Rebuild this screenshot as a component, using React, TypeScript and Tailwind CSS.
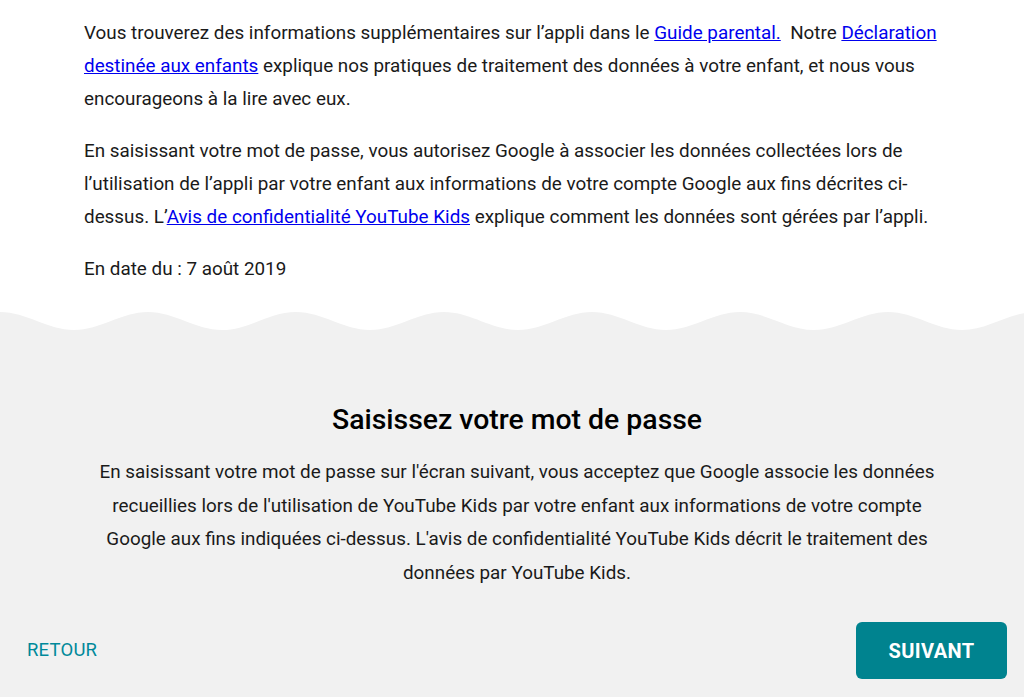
import React from 'react';

const WAVE_PERIOD = 148;

function wavePath(width: number, top: number, bottom: number) {
  // peaks (gray high) at multiples of the period, troughs halfway
  const half = WAVE_PERIOD / 2;
  const k = half * 0.36;
  let d = `M0 ${top}`;
  let x = 0;
  let up = true;
  while (x < width + WAVE_PERIOD) {
    const y0 = up ? top : bottom;
    const y1 = up ? bottom : top;
    d += ` C${x + k} ${y0} ${x + half - k} ${y1} ${x + half} ${y1}`;
    x += half;
    up = !up;
  }
  d += ` L${x} 40 L0 40 Z`;
  return d;
}

export default function App() {
  return (
    <div className="w-full h-[697px] overflow-hidden bg-white font-['Roboto',sans-serif] text-[#1a1a1a] flex flex-col">
      {/* Terms text */}
      <div className="px-[84px] pt-[17px] text-[18.85px] leading-[33px]">
        <p>
          Vous trouverez des informations supplémentaires sur l’appli dans le{' '}
          <a href="#" className="text-[#0000ee] underline">Guide parental.</a>
          {'\u00a0 '}Notre{' '}
          <a href="#" className="text-[#0000ee] underline">Déclaration destinée aux enfants</a>{' '}
          explique nos pratiques de traitement des données à votre enfant, et nous vous encourageons à la lire avec eux.
        </p>
        <p className="mt-[19px]">
          En saisissant votre mot de passe, vous autorisez Google à associer les données collectées lors de l’utilisation de l’appli par votre enfant aux informations de votre compte Google aux fins décrites ci-dessus. L’
          <a href="#" className="text-[#0000ee] underline">Avis de confidentialité YouTube Kids</a>{' '}
          explique comment les données sont gérées par l’appli.
        </p>
        <p className="mt-[19px]">En date du : 7 août 2019</p>
      </div>

      {/* Wave divider */}
      <div className="mt-[25px] h-[20px] w-full">
        <svg width="100%" height="20" viewBox="0 0 1024 20" preserveAspectRatio="none" className="block">
          <path d={wavePath(1024, 1, 19)} fill="#f1f1f1" />
        </svg>
      </div>

      {/* Password section */}
      <div className="flex-1 bg-[#f1f1f1] flex flex-col justify-between">
        <div className="pt-[72px] pl-[89px] pr-[79px] text-center">
          <h1 className="text-[28.4px] leading-[34px] font-medium text-black">Saisissez votre mot de passe</h1>
          <p className="mt-[19px] text-[18.85px] leading-[33.5px]">
            En saisissant votre mot de passe sur l'écran suivant, vous acceptez que Google associe les données recueillies lors de l'utilisation de YouTube Kids par votre enfant aux informations de votre compte Google aux fins indiquées ci-dessus. L'avis de confidentialité YouTube Kids décrit le traitement des données par YouTube Kids.
          </p>
        </div>

        <div className="flex items-center justify-between pl-[27px] pr-[17px] pb-[18px]">
          <button className="text-[18.5px] text-[#00899a] tracking-[0.2px]">RETOUR</button>
          <button className="h-[57px] w-[151px] rounded-[6px] bg-[#00838f] text-white text-[20px] font-bold tracking-[0.4px]">
            SUIVANT
          </button>
        </div>
      </div>
    </div>
  );
}
